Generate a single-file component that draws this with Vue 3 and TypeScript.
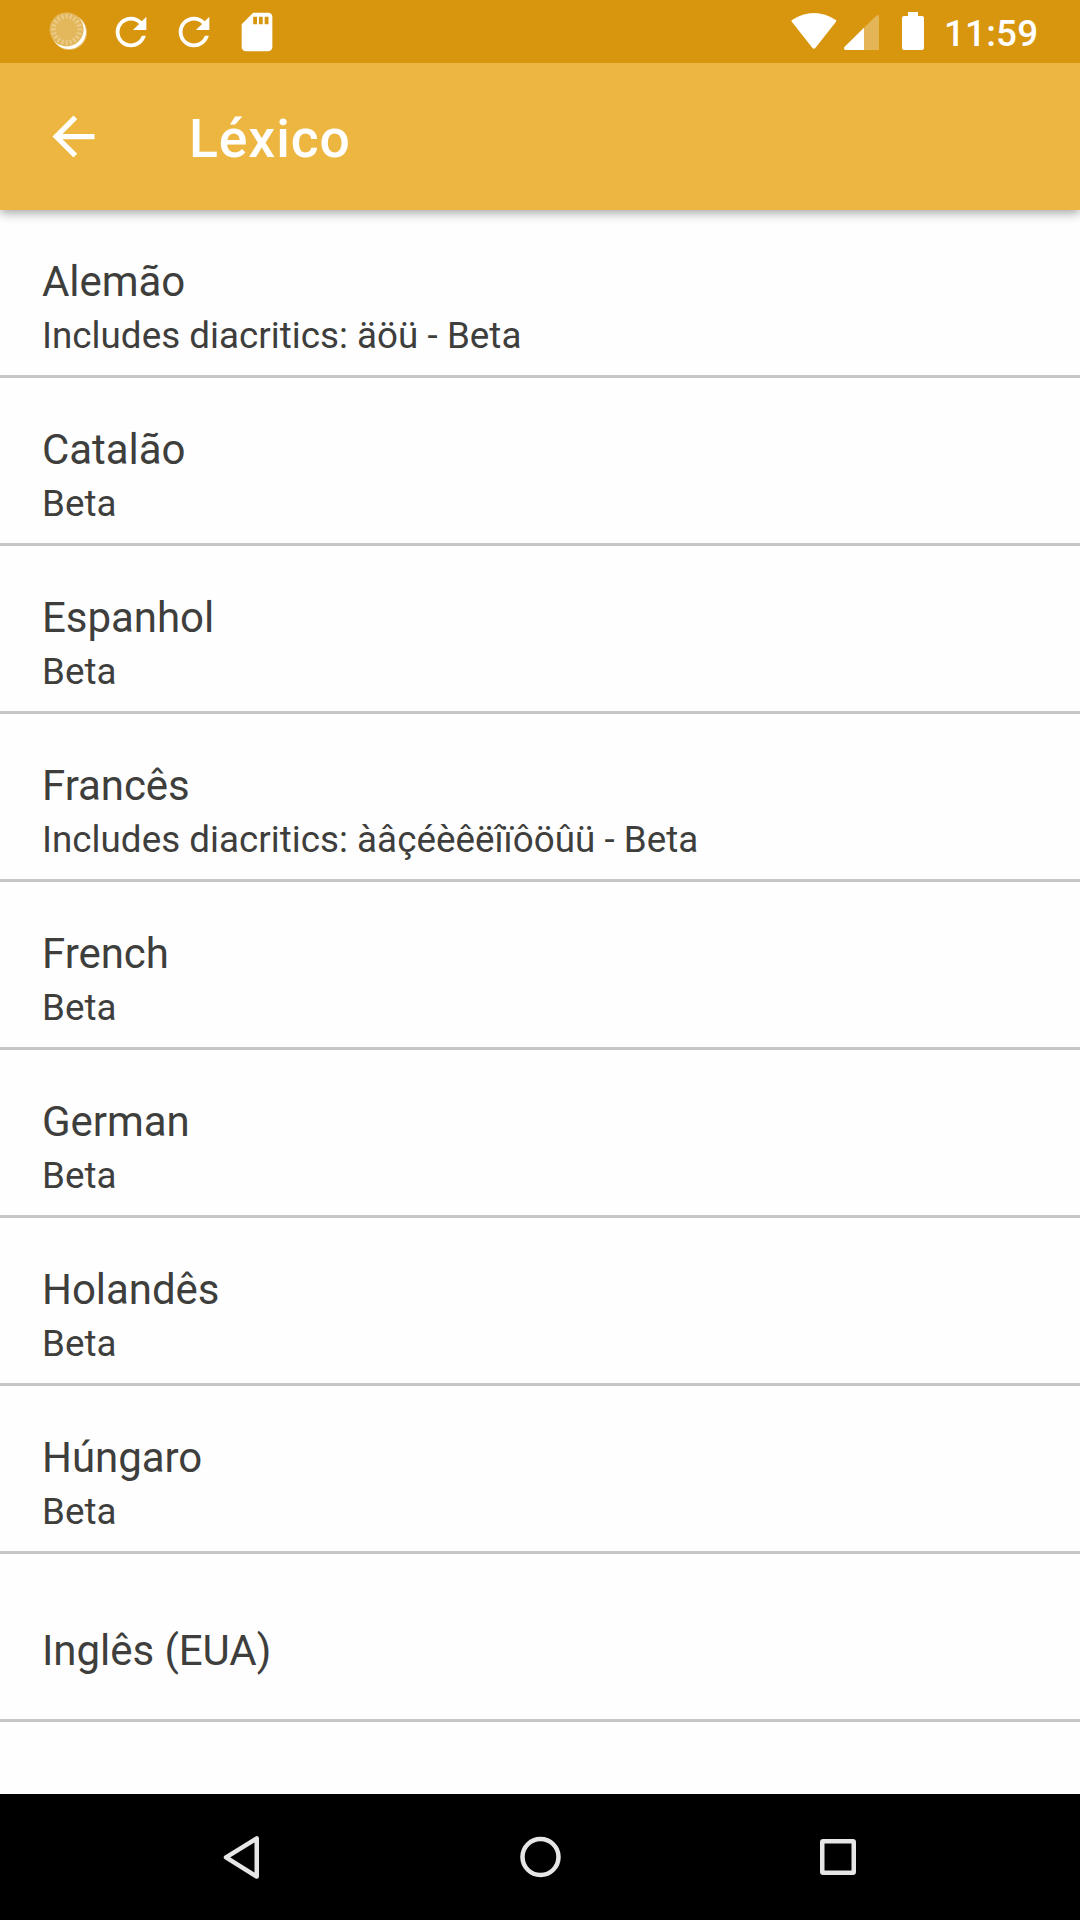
<script setup lang="ts">
interface Lexicon {
  name: string
  note?: string
}

const time = '11:59'
const lexicons: Lexicon[] = [
  { name: 'Alemão', note: 'Includes diacritics: äöü - Beta' },
  { name: 'Catalão', note: 'Beta' },
  { name: 'Espanhol', note: 'Beta' },
  { name: 'Francês', note: 'Includes diacritics: àâçéèêëîïôöûü - Beta' },
  { name: 'French', note: 'Beta' },
  { name: 'German', note: 'Beta' },
  { name: 'Holandês', note: 'Beta' },
  { name: 'Húngaro', note: 'Beta' },
  { name: 'Inglês (EUA)' },
]

// Radial ticks of the sync spinner
const ticks: number[] = Array.from({ length: 20 }, (_, i) => i * 18)
</script>

<template>
  <div class="screen">
    <header class="status">
      <div class="notifications">
        <svg class="slot" viewBox="0 0 63 63">
          <circle cx="32.2" cy="32.2" r="17.8" fill="#fff" fill-opacity="0.4" />
          <circle cx="31.8" cy="31.8" r="17.2" fill="#fff" />
          <circle cx="29.6" cy="29.4" r="17" fill="#e3b75c" />
          <line
            v-for="angle in ticks"
            :key="angle"
            x1="29.6"
            y1="13.8"
            x2="29.6"
            y2="18.6"
            stroke="#eccd8c"
            stroke-width="1.8"
            :transform="`rotate(${angle} 29.6 29.4)`"
          />
        </svg>
        <div v-for="n in 2" :key="n" class="slot">
          <svg class="glyph" viewBox="0 0 24 24">
            <path d="M17.65 6.35C16.2 4.9 14.21 4 12 4c-4.42 0-7.99 3.58-7.99 8s3.57 8 7.99 8c3.73 0 6.84-2.55 7.73-6h-2.08c-.82 2.33-3.04 4-5.65 4-3.31 0-6-2.69-6-6s2.69-6 6-6c1.66 0 3.14.69 4.22 1.78L13 11h7V4l-2.35 2.35z" />
          </svg>
        </div>
        <div class="slot">
          <svg class="glyph" viewBox="0 0 24 24">
            <path d="M18 2h-8L4.02 8 4 20c0 1.1.9 2 2 2h12c1.1 0 2-.9 2-2V4c0-1.1-.9-2-2-2zm-6 6h-2V4h2v4zm3 0h-2V4h2v4zm3 0h-2V4h2v4z" />
          </svg>
        </div>
      </div>
      <div class="system">
        <svg width="134" height="63" viewBox="0 0 134 63">
          <path d="M1.8 21.8Q0.8 20.8 2 20C16 10.7 32 10.7 45.8 20Q47 20.8 46 21.8L25.5 47.7Q23.9 49.7 22.3 47.7Z" />
          <path d="M56 50Q53 49.5 54.5 47L86 16Q89 13.8 89 17V50Z" fill-opacity="0.3" />
          <path d="M74 27.8V50H56Q53 49.5 54.5 47Z" />
          <path d="M118 12h10v4h4q2 0 2 2v30q0 2-2 2h-18q-2 0-2-2V18q0-2 2-2h4z" />
        </svg>
        <span class="clock">{{ time }}</span>
      </div>
    </header>

    <nav class="appbar">
      <svg class="back" viewBox="0 0 24 24">
        <path d="M20 11H7.83l5.59-5.59L12 4l-8 8 8 8 1.41-1.41L7.83 13H20v-2z" />
      </svg>
      <h1>Léxico</h1>
    </nav>

    <main>
      <ul>
        <li v-for="item in lexicons" :key="item.name" :class="{ single: !item.note }">
          <div class="name">{{ item.name }}</div>
          <div v-if="item.note" class="note">{{ item.note }}</div>
        </li>
      </ul>
    </main>

    <footer class="navbar">
      <svg viewBox="0 0 63 63"><path d="M45.75 13.4V51.6L15 32.3Z" /></svg>
      <svg viewBox="0 0 63 63"><circle cx="31.5" cy="32" r="18" /></svg>
      <svg viewBox="0 0 63 63"><rect x="15.25" y="16.25" width="31.5" height="31.5" rx="1" /></svg>
    </footer>
  </div>
</template>

<style>
body {
  margin: 0;
  background: #fefefe;
}
</style>

<style scoped>
.screen {
  display: flex;
  flex-direction: column;
  width: 1080px;
  height: 1920px;
  overflow: hidden;
  background: #fefefe;
  color: #3e3e3d;
  font-family: Roboto, "Liberation Sans", sans-serif;
}

.status {
  position: relative;
  z-index: 2;
  display: flex;
  justify-content: space-between;
  flex: none;
  height: 63px;
  padding: 0 43px 0 37px;
  background: #d8960f;
  color: #fff;
}

.status svg {
  display: block;
  fill: #fff;
}

.notifications,
.system {
  display: flex;
  align-items: center;
}

.slot {
  display: flex;
  align-items: center;
  justify-content: center;
  width: 63px;
  height: 63px;
}

.glyph {
  width: 46px;
  height: 46px;
  margin-right: 1px;
}

.clock {
  width: 93px;
  margin-left: 20px;
  padding-top: 5px;
  font-size: 36.75px;
  font-weight: 500;
  letter-spacing: 0.2px;
  line-height: 44px;
  white-space: nowrap;
}

.appbar {
  position: relative;
  z-index: 1;
  display: flex;
  align-items: center;
  flex: none;
  height: 147px;
  padding-left: 42px;
  background: #edb641;
  box-shadow: 0 3px 10px rgba(0, 0, 0, 0.36);
  color: #fff;
}

.back {
  width: 63px;
  height: 63px;
  fill: #fff;
}

h1 {
  margin: 5px 0 0 84px;
  font-size: 53.5px;
  font-weight: 500;
  letter-spacing: 0.9px;
  line-height: 62px;
}

main {
  flex: 1;
}

ul {
  margin: 0;
  padding: 0;
  list-style: none;
}

li {
  box-sizing: border-box;
  height: 168px;
  padding: 47px 42px 0;
  border-bottom: 3px solid #c6c6c6;
}

li.single {
  padding-top: 72px;
}

.name {
  font-size: 42px;
  letter-spacing: -0.05px;
  line-height: 49px;
}

.note {
  margin-top: 8px;
  font-size: 36.75px;
  letter-spacing: 0.03px;
  line-height: 43px;
}

.navbar {
  box-sizing: border-box;
  display: flex;
  align-items: center;
  justify-content: center;
  flex: none;
  gap: 235px;
  height: 126px;
  padding-bottom: 2px;
  background: #000;
}

.navbar svg {
  width: 63px;
  height: 63px;
  fill: none;
  stroke: #e6e6e6;
  stroke-width: 4.5;
  stroke-linejoin: round;
}
</style>
